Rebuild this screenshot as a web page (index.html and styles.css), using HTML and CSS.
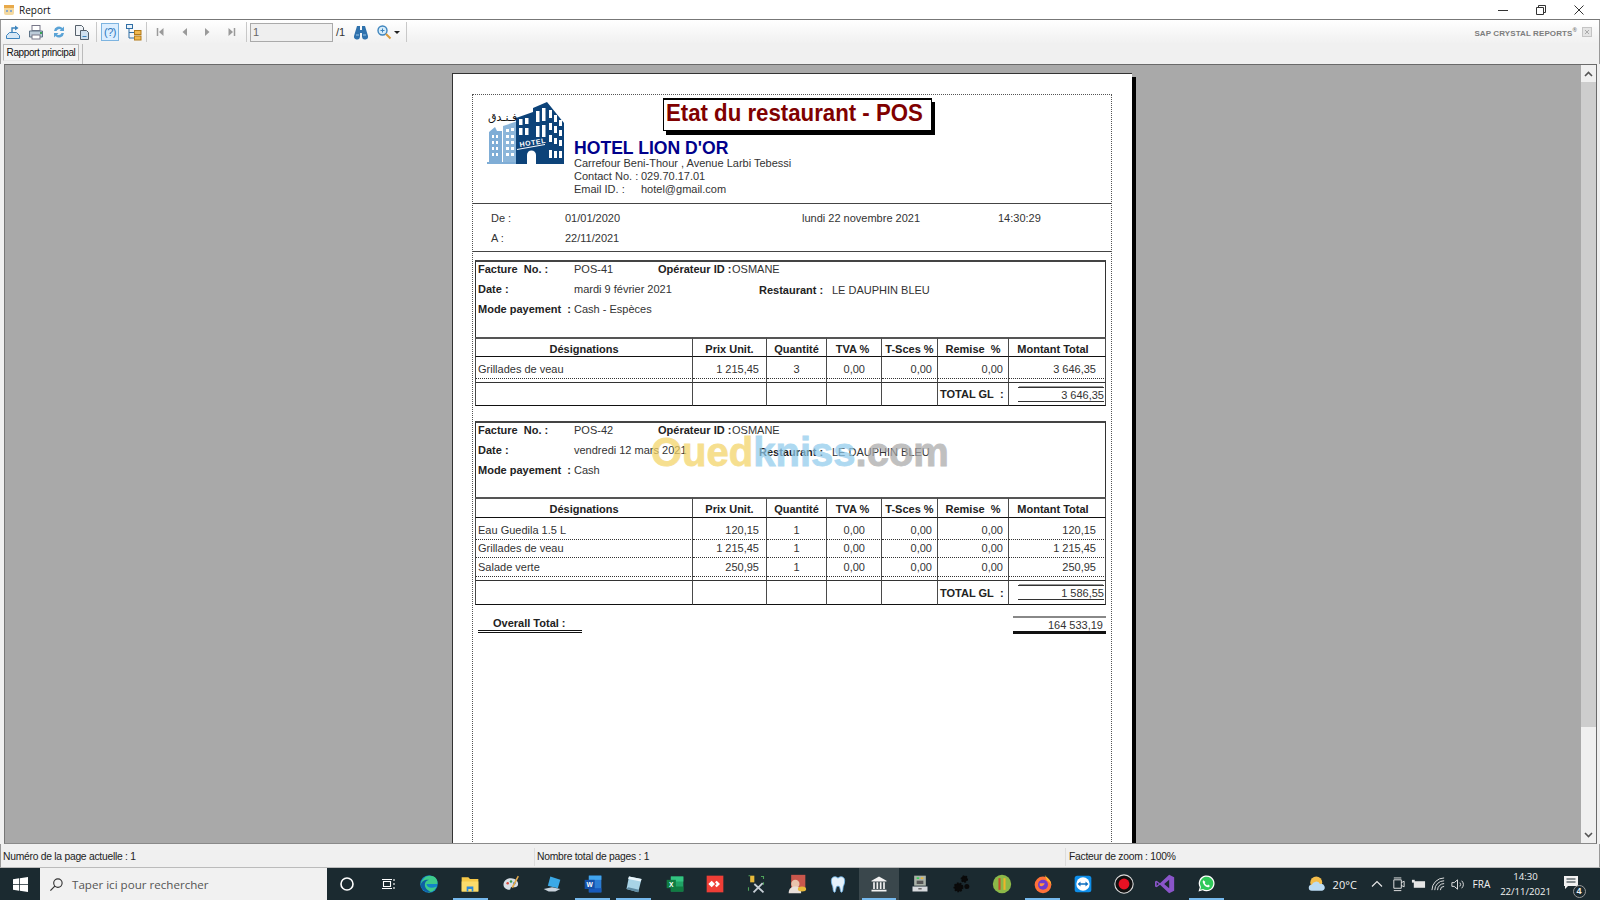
FILE: index.html
```html
<!DOCTYPE html>
<html lang="fr">
<head>
<meta charset="utf-8">
<title>Report</title>
<link rel="stylesheet" href="styles.css">
</head>
<body>
<div class="window">
  <header class="titlebar">
    <svg class="app-icon" viewBox="0 0 12 12"><rect x="1" y="1" width="10" height="10" rx="2" fill="#f4d9a0"/><rect x="1" y="1" width="10" height="3" fill="#e8a94a"/><rect x="3" y="6" width="2" height="2" fill="#8aa7c9"/><rect x="7" y="6" width="2" height="2" fill="#8aa7c9"/></svg>
    <span class="title-text">Report</span>
    <div class="win-controls">
      <svg viewBox="0 0 12 12"><path d="M1 6.500h10" stroke="#333" fill="none"/></svg>
      <svg viewBox="0 0 12 12"><path d="M1.500 3.500h7v7h-7zM3.500 3.500v-2h7v7h-2" stroke="#333" fill="none"/></svg>
      <svg viewBox="0 0 12 12"><path d="M1.500 1.500l9 9M10.500 1.500l-9 9" stroke="#333" fill="none"/></svg>
    </div>
  </header>

  <nav class="toolbar">
    <button class="tool"><svg viewBox="0 0 16 16"><path d="M1.500 14.500v-3l3-3h7l3 3v3z" fill="#d7e8f6" stroke="#3d84bd"/><path d="M7 9V4h4" stroke="#3d84bd" fill="none" stroke-width="1.400"/><path d="M10 1.500l3.500 2.500-3.500 2.500z" fill="#3d84bd"/></svg></button>
    <button class="tool"><svg viewBox="0 0 16 16"><rect x="4" y="1.500" width="8" height="5" fill="#fff" stroke="#778"/><path d="M1.500 7h13v6h-13z" fill="#bccbd9" stroke="#5f7488"/><rect x="4" y="11" width="8" height="4" fill="#fff" stroke="#778"/><rect x="12" y="8" width="2" height="2" fill="#3aa655"/></svg></button>
    <button class="tool"><svg viewBox="0 0 16 16"><path d="M3 7a5 5 0 0 1 8.500-3L13 2.500V7H8.500l1.500-1.500A3 3 0 0 0 5.500 7z" fill="#5aa3d6"/><path d="M13 9a5 5 0 0 1-8.500 3L3 13.500V9h4.500L6 10.500A3 3 0 0 0 10.500 9z" fill="#5aa3d6"/></svg></button>
    <button class="tool"><svg viewBox="0 0 16 16"><path d="M1.500 1.500h6l2 2v8h-8z" fill="#eef2f6" stroke="#55606b"/><path d="M6.500 6.500h6l2 2v7h-8z" fill="#cfe0ef" stroke="#55606b"/><path d="M8.500 12.500h4" stroke="#3d84bd"/></svg></button>
    <i class="tool-sep tool-sep-a"></i>
    <button class="tool tool-on"><span class="help-glyph">(?)</span></button>
    <button class="tool tool-tree"><svg viewBox="0 0 18 18"><rect x="1.500" y="1.500" width="6" height="4" fill="#e9f2fa" stroke="#2f6ea5"/><path d="M4 5.500v9.500h5M4 9.500h5" stroke="#2f6ea5" fill="none"/><rect x="9.500" y="7.500" width="6.500" height="4" fill="#f2b94e" stroke="#b27a1b"/><rect x="9.500" y="13" width="6.500" height="4" fill="#f2b94e" stroke="#b27a1b"/></svg></button>
    <i class="tool-sep tool-sep-b"></i>
    <button class="tool tool-nav"><svg viewBox="0 0 9 12"><path d="M1.500 2v8" stroke="#9a9a9a" stroke-width="1.500"/><path d="M7.500 2v8L3 6z" fill="#9a9a9a"/></svg></button>
    <button class="tool tool-nav"><svg viewBox="0 0 9 12"><path d="M7 2v8L2.500 6z" fill="#9a9a9a"/></svg></button>
    <button class="tool tool-nav"><svg viewBox="0 0 9 12"><path d="M2 2v8L6.500 6z" fill="#9a9a9a"/></svg></button>
    <button class="tool tool-nav"><svg viewBox="0 0 9 12"><path d="M1.500 2v8L6 6z" fill="#9a9a9a"/><path d="M7.500 2v8" stroke="#9a9a9a" stroke-width="1.500"/></svg></button>
    <i class="tool-sep tool-sep-c"></i>
    <div class="page-input">1</div>
    <span class="page-of">/1</span>
    <button class="tool tool-bino"><svg viewBox="0 0 16 16"><path d="M4 2h3v4h2V2h3l3 10a2.500 2.500 0 0 1-6 1V9H7v4a2.500 2.500 0 0 1-6-1z" fill="#2f72ad"/><path d="M3 11h3M10 11h3" stroke="#9cc4e4"/></svg></button>
    <button class="tool tool-zoom"><svg viewBox="0 0 16 16"><circle cx="6.500" cy="6.500" r="4.500" fill="#d6ecfa" stroke="#3d84bd" stroke-width="1.400"/><path d="M4.500 6.500h4M6.500 4.500v4" stroke="#3d84bd"/><path d="M10 10l4.500 4.500" stroke="#d99a3c" stroke-width="2"/></svg></button>
    <i class="caret"></i>
    <i class="tool-sep tool-sep-d"></i>
    <div class="brand">SAP CRYSTAL REPORTS<sup>®</sup></div>
    <svg class="brand-close" viewBox="0 0 10 10"><rect x=".5" y=".5" width="9" height="9" fill="#e4e4e4" stroke="#c4c4c4"/><path d="M3 3l4 4M7 3L3 7" stroke="#aaa"/></svg>
  </nav>

  <div class="tabs">
    <div class="tab">Rapport principal</div>
    <i class="tab-sep"></i>
  </div>

  <main class="viewer">
    <div class="canvas">
      <article class="page">
        <div class="frame">
          <section class="head">
            <div class="logo">
              <svg viewBox="0 0 78 62" width="78" height="62">
                <path d="M2 62V30l6-5 2 4h5v33z" fill="#7fadd6"/>
                <path d="M16 62V24l15-5v43z" fill="#8cb6da"/>
                <g fill="#fff">
                  <rect x="5" y="33" width="2" height="3"/><rect x="9" y="33" width="2" height="3"/><rect x="5" y="39" width="2" height="3"/><rect x="9" y="39" width="2" height="3"/><rect x="5" y="45" width="2" height="3"/><rect x="9" y="45" width="2" height="3"/><rect x="5" y="51" width="2" height="3"/><rect x="9" y="51" width="2" height="3"/>
                  <rect x="19" y="27" width="3" height="3"/><rect x="24" y="26" width="3" height="3"/><rect x="19" y="33" width="3" height="3"/><rect x="24" y="33" width="3" height="3"/><rect x="19" y="39" width="3" height="3"/><rect x="24" y="39" width="3" height="3"/><rect x="19" y="45" width="3" height="3"/><rect x="24" y="45" width="3" height="3"/><rect x="19" y="51" width="3" height="3"/><rect x="24" y="51" width="3" height="3"/>
                </g>
                <path d="M0 60h30v2H0z" fill="#7fadd6"/>
                <path d="M29 16l17-6V6L60 0l17 21v41H29z" fill="#0d4379"/>
                <g fill="#fff">
                  <rect x="32" y="17" width="3.500" height="6"/><rect x="38" y="16" width="3.500" height="6"/>
                  <rect x="32" y="26" width="3.500" height="7"/><rect x="38" y="26" width="3.500" height="7"/>
                  <rect x="49" y="9" width="3.500" height="11"/><rect x="55" y="6" width="3.500" height="13"/>
                  <rect x="49" y="24" width="3.500" height="11"/><rect x="55" y="23" width="3.500" height="12"/>
                  <rect x="62" y="8" width="3" height="8"/><rect x="67" y="13" width="3" height="7"/><rect x="72" y="18" width="3" height="6"/>
                  <rect x="62" y="21" width="3" height="7"/><rect x="67" y="24" width="3" height="7"/><rect x="72" y="28" width="3" height="6"/>
                  <rect x="62" y="33" width="3" height="7"/><rect x="67" y="36" width="3" height="6"/><rect x="72" y="38" width="3" height="6"/>
                  <rect x="62" y="48" width="3" height="8"/><rect x="67" y="49" width="3" height="7"/><rect x="72" y="49" width="3" height="7"/>
                  <path d="M40 62v-9a4.500 4.500 0 0 1 9 0v9z"/>
                  <path d="M30 47l28-5v1L30 48z"/>
                </g>
                <text class="logo-sign" x="33" y="45" transform="rotate(-9 33 45)">HOTEL</text>
              </svg>
              <span class="logo-ar" dir="rtl" lang="ar">فـنـدق</span>
            </div>
            <div class="head-right">
              <h1 class="report-title"><span>Etat du restaurant - POS</span></h1>
              <h2 class="company">HOTEL LION D'OR</h2>
              <p class="head-line">Carrefour Beni-Thour , Avenue Larbi Tebessi</p>
              <p class="head-line head-split"><span>Contact No. :</span><span>029.70.17.01</span></p>
              <p class="head-line head-split"><span>Email ID. :</span><span>hotel@gmail.com</span></p>
            </div>
          </section>

          <section class="dates">
            <span>De :</span><span>01/01/2020</span><span>lundi 22 novembre 2021</span><span>14:30:29</span>
            <span>A :</span><span>22/11/2021</span>
          </section>

          <section class="invoice">
            <div class="meta">
              <div class="meta-row meta-r1"><b>Facture&nbsp; No. :</b><span>POS-41</span><b>Opérateur ID :</b><span>OSMANE</span></div>
              <div class="meta-row meta-r2"><b>Date :</b><span>mardi 9 février 2021</span><b class="drop">Restaurant :</b><span class="drop">LE DAUPHIN BLEU</span></div>
              <div class="meta-row meta-r3"><b>Mode payement&nbsp; :</b><span>Cash - Espèces</span></div>
            </div>
            <table class="lines">
              <colgroup><col class="c1"><col class="c2"><col class="c3"><col class="c4"><col class="c5"><col class="c6"><col class="c7"></colgroup>
              <thead>
                <tr><th>Désignations</th><th>Prix Unit.</th><th>Quantité</th><th>TVA %</th><th>T-Sces %</th><th>Remise&nbsp; %</th><th>Montant Total</th></tr>
              </thead>
              <tbody>
                <tr class="first"><td>Grillades de veau</td><td>1 215,45</td><td>3</td><td>0,00</td><td>0,00</td><td>0,00</td><td>3 646,35</td></tr>
                <tr class="gap"><td></td><td></td><td></td><td></td><td></td><td></td><td></td></tr>
              </tbody>
              <tfoot>
                <tr><td></td><td></td><td></td><td></td><td></td><td class="total-label">TOTAL GL&nbsp; :</td><td class="total-value"><div>3 646,35</div></td></tr>
              </tfoot>
            </table>
          </section>

          <section class="invoice invoice-next">
            <div class="meta">
              <div class="meta-row meta-r1"><b>Facture&nbsp; No. :</b><span>POS-42</span><b>Opérateur ID :</b><span>OSMANE</span></div>
              <div class="meta-row meta-r2"><b>Date :</b><span>vendredi 12 mars 2021</span><b class="drop">Restaurant :</b><span class="drop">LE DAUPHIN BLEU</span></div>
              <div class="meta-row meta-r3"><b>Mode payement&nbsp; :</b><span>Cash</span></div>
            </div>
            <table class="lines">
              <colgroup><col class="c1"><col class="c2"><col class="c3"><col class="c4"><col class="c5"><col class="c6"><col class="c7"></colgroup>
              <thead>
                <tr><th>Désignations</th><th>Prix Unit.</th><th>Quantité</th><th>TVA %</th><th>T-Sces %</th><th>Remise&nbsp; %</th><th>Montant Total</th></tr>
              </thead>
              <tbody>
                <tr class="first"><td>Eau Guedila 1.5 L</td><td>120,15</td><td>1</td><td>0,00</td><td>0,00</td><td>0,00</td><td>120,15</td></tr>
                <tr class="mid"><td>Grillades de veau</td><td>1 215,45</td><td>1</td><td>0,00</td><td>0,00</td><td>0,00</td><td>1 215,45</td></tr>
                <tr class="end"><td>Salade verte</td><td>250,95</td><td>1</td><td>0,00</td><td>0,00</td><td>0,00</td><td>250,95</td></tr>
                <tr class="gap"><td></td><td></td><td></td><td></td><td></td><td></td><td></td></tr>
              </tbody>
              <tfoot>
                <tr><td></td><td></td><td></td><td></td><td></td><td class="total-label">TOTAL GL&nbsp; :</td><td class="total-value"><div>1 586,55</div></td></tr>
              </tfoot>
            </table>
          </section>

          <section class="overall">
            <div class="overall-label">Overall Total :</div>
            <div class="overall-value">164 533,19</div>
          </section>
        </div>
        <div class="watermark"><span class="wm-y">Oued</span><span class="wm-b">kniss</span><span class="wm-g">.com</span></div>
      </article>
    </div>
    <aside class="scrollbar">
      <div class="sb-btn"><svg viewBox="0 0 9 6"><path d="M1 5l3.500-3.500L8 5" stroke="#555" stroke-width="1.600" fill="none"/></svg></div>
      <div class="sb-thumb"></div>
      <div class="sb-track"></div>
      <div class="sb-btn"><svg viewBox="0 0 9 6"><path d="M1 1l3.500 3.500L8 1" stroke="#555" stroke-width="1.600" fill="none"/></svg></div>
    </aside>
  </main>

  <footer class="statusbar">
    <div class="st st1">Numéro de la page actuelle : 1</div>
    <div class="st st2">Nombre total de pages : 1</div>
    <div class="st st3">Facteur de zoom : 100%</div>
  </footer>

  <div class="taskbar">
    <div class="start"><svg viewBox="0 0 16 16" width="15" height="15"><path d="M0 2.300l6.500-.9v6.200H0zM7.300 1.300L16 0v7.600H7.300zM0 8.400h6.500v6.200L0 13.700zM7.300 8.400H16V16l-8.700-1.300z" fill="#fff"/></svg></div>
    <div class="search">
      <svg viewBox="0 0 16 16" width="15" height="15"><circle cx="9.500" cy="6.500" r="4.500" fill="none" stroke="#333" stroke-width="1.200"/><path d="M6.200 9.800L1.500 14.500" stroke="#333" stroke-width="1.300"/></svg>
      <span>Taper ici pour rechercher</span>
    </div>
    <div class="task"><svg viewBox="0 0 20 20"><circle cx="10" cy="10" r="6" fill="none" stroke="#fff" stroke-width="1.600"/></svg></div>
    <div class="task"><svg viewBox="0 0 20 20"><path d="M4 5.500h10M4 14.500h10M5.500 7.500h7v5h-7z M16 5v2M16 9v2M16 13v2" fill="none" stroke="#fff" stroke-width="1.100"/></svg></div>
    <div class="task"><svg viewBox="0 0 24 24"><circle cx="12" cy="12" r="10.500" fill="#1383c9"/><path d="M2 13C3 6 8 2 13 2c6 0 10 4 9 10H9c0 4 6 6 12 3-2 5-6 7-10 7C9 18 5 15 2 13z" fill="#3ecb8b"/><path d="M2 13c1-5 6-7 10-6-3 1-5 3-5 6 0 4 3 7 7 8-6 2-12-3-12-8z" fill="#0f5fa3"/></svg></div>
    <div class="task run"><svg viewBox="0 0 24 24"><path d="M2 4h8l2 2h10v15H2z" fill="#f7c948"/><path d="M2 9h20v12H2z" fill="#fbdb6b"/><path d="M8 21v-6h8v6h-2v-3h-4v3z" fill="#2b88d8"/></svg></div>
    <div class="task"><svg viewBox="0 0 24 24"><path d="M12 5C6 5 3 9 3 13c0 4 4 6 7 6 2 0 1-2 2-3 1-1 6 1 8-2 2-4-2-9-8-9z" fill="#d8dfe6"/><circle cx="8" cy="11" r="1.500" fill="#d94a3d"/><circle cx="12" cy="9" r="1.500" fill="#3a9a4b"/><circle cx="16" cy="11" r="1.500" fill="#2f7fd6"/><path d="M20 2l1.500 1-7 14-2-1z" fill="#e2a84b"/></svg></div>
    <div class="task"><svg viewBox="0 0 24 24"><path d="M10 3l12 4-3 10-12-3z" fill="#3ba9e6"/><path d="M2 18l10-2 10 2-6 3H8z" fill="#c9d3dc"/></svg></div>
    <div class="task run"><svg viewBox="0 0 24 24"><path d="M7 2h15v20H7z" fill="#2b7cd3"/><path d="M7 2h15v5H7z" fill="#41a5ee"/><path d="M7 17h15v5H7z" fill="#185abd"/><rect x="2" y="7" width="12" height="11" fill="#1450a8"/><text class="tile-letter" x="8" y="16" text-anchor="middle">W</text></svg></div>
    <div class="task run"><svg viewBox="0 0 24 24"><path d="M6 3l15 3-4 16L3 18z" fill="#a8d3e6"/><path d="M6 3l15 3-1 3L5 6z" fill="#eaf5fa"/><path d="M3 18l14 4 1-3-13-3z" fill="#5f8ba3"/></svg></div>
    <div class="task"><svg viewBox="0 0 24 24"><path d="M7 3h15v18H7z" fill="#21a366"/><path d="M7 3h15v6H7z" fill="#33c481"/><path d="M7 15h15v6H7z" fill="#107c41"/><rect x="2" y="7" width="11" height="10" fill="#107c41"/><text class="tile-letter" x="7.500" y="15.500" text-anchor="middle">X</text></svg></div>
    <div class="task"><svg viewBox="0 0 24 24"><rect x="2" y="2" width="20" height="20" fill="#ef3e36"/><path d="M8 8l-4 4 4 4 4-4zM14 8l4 4-4 4 -2-2 2-2-2-2z" fill="#fff"/></svg></div>
    <div class="task"><svg viewBox="0 0 24 24"><rect x="5" y="2" width="5" height="8" fill="#e8b93a"/><path d="M3 2h2M3 20v-4M18 3h3v3M21 10v3" stroke="#4fa25a" stroke-width="1.300" fill="none"/><path d="M10 12l11 10M20 11L9 22" stroke="#c7cfd6" stroke-width="2.200"/></svg></div>
    <div class="task"><svg viewBox="0 0 24 24"><rect x="5" y="1" width="17" height="16" fill="#c9574c"/><circle cx="10" cy="12" r="5" fill="#e9c3ac"/><path d="M2 23c0-6 4-8 8-8s7 2 7 8z" fill="#e9e0da"/><ellipse cx="18" cy="18" rx="5" ry="3" fill="#e8b93a"/></svg></div>
    <div class="task"><svg viewBox="0 0 24 24"><path d="M12 5c3-3 8-2 8 3 0 5-2 6-2 9 0 3-1 5-2 5s-1-3-2-6c-.5-2-3.500-2-4 0-1 3-1 6-2 6s-2-2-2-5c0-3-2-4-2-9 0-5 5-6 8-3z" fill="#e5f1fb" stroke="#6fb6ea"/></svg></div>
    <div class="task run active"><svg viewBox="0 0 24 24"><path d="M3 8l9-5 9 5v1H3z" fill="#f2f2f2"/><path d="M5 10h2v8H5zM9 10h2v8H9zM13 10h2v8h-2zM17 10h2v8h-2zM3 19h18v2H3z" fill="#f2f2f2"/></svg></div>
    <div class="task"><svg viewBox="0 0 24 24"><rect x="5" y="2" width="14" height="12" fill="#aab2a8"/><rect x="8" y="4" width="3" height="2" fill="#3c5"/><rect x="13" y="4" width="3" height="2" fill="#e8b93a"/><rect x="8" y="8" width="8" height="4" fill="#555"/><rect x="3" y="15" width="18" height="6" fill="#d7dadd"/><rect x="10" y="17" width="4" height="1.500" fill="#555"/></svg></div>
    <div class="task"><svg viewBox="0 0 24 24"><g fill="#0a0a0a" stroke="#0a0a0a" stroke-width="2" stroke-dasharray="2 1.500"><circle cx="9" cy="16" r="5"/><circle cx="16" cy="6" r="3.500"/></g><circle cx="19" cy="15" r="3" fill="#0a0a0a"/></svg></div>
    <div class="task"><svg viewBox="0 0 24 24"><circle cx="12" cy="12" r="11" fill="#8cb848"/><path d="M9 5v14" stroke="#c64a2e" stroke-width="2.500"/><path d="M15 5v14" stroke="#f0b429" stroke-width="2.500"/></svg></div>
    <div class="task run"><svg viewBox="0 0 24 24"><circle cx="12" cy="13" r="10" fill="#ff7139"/><path d="M14 1c2 3 8 6 8 13 0-3-3-5-5-6z" fill="#ffbd2e"/><circle cx="12" cy="13" r="6" fill="#6e3bd0"/><path d="M8 11h6a4 4 0 0 1-6 3z" fill="#ff9640"/></svg></div>
    <div class="task"><svg viewBox="0 0 24 24"><rect x="2" y="2" width="20" height="20" rx="3" fill="#0e8ee9"/><circle cx="12" cy="12" r="8" fill="#fff"/><path d="M5.500 12l3.500-3v2h6V9l3.500 3-3.500 3v-2H9v2z" fill="#0e6fc0"/></svg></div>
    <div class="task"><svg viewBox="0 0 24 24"><circle cx="12" cy="12" r="11" fill="#111" stroke="#ddd" stroke-width="1.300"/><circle cx="12" cy="12" r="6.500" fill="#e81123"/></svg></div>
    <div class="task"><svg viewBox="0 0 24 24"><path d="M17 1l6 3v16l-6 3L6 13l-4 3-2-1V9l2-1 4 3z" fill="#8a55c9"/><path d="M17 7l-6 5 6 5z" fill="#1b2a30"/><path d="M2 10l2.500 2L2 14z" fill="#1b2a30"/></svg></div>
    <div class="task run"><svg viewBox="0 0 24 24"><path d="M3 21l1.500-5A9.500 9.500 0 1 1 8 19.500z" fill="#fff"/><path d="M5 19l1-3.500A8 8 0 1 1 8.500 18z" fill="#30c85a"/><path d="M9 7.500c-1 .5-1.500 2 0 4.500s4 4 5.500 4c1 0 2-1 2-2l-2-1.300-1 1c-1.200-.3-2.700-2-3-3l.8-1z" fill="#fff"/></svg></div>
    <div class="tray">
      <svg class="weather" viewBox="0 0 24 24"><circle cx="11" cy="10" r="8" fill="#f4bd4b"/><path d="M5 21a4 4 0 0 1 0-8 6 6 0 0 1 11-1 4.500 4.500 0 0 1 3 9z" fill="#bcdcf4"/></svg>
      <span class="temp">20°C</span>
      <svg class="tray-caret" viewBox="0 0 12 8"><path d="M1 6.500l5-5 5 5" fill="none" stroke="#e6e6e6" stroke-width="1.200"/></svg>
      <svg class="tray-ico ti-meet" viewBox="0 0 16 16"><path d="M3 3h8v9H3zM11 6l3-1.500v6L11 9M3 1h8M3 14.500h8" fill="none" stroke="#e6e6e6"/></svg>
      <svg class="tray-ico ti-bat" viewBox="0 0 16 16"><rect x="3" y="4.500" width="12" height="7" fill="#e6e6e6"/><path d="M1 3h3v3H1z" fill="#e6e6e6"/></svg>
      <svg class="tray-ico ti-wifi" viewBox="0 0 16 16"><path d="M1 14a13 13 0 0 1 13-13M4 14a10 10 0 0 1 10-10M7 14a7 7 0 0 1 7-7M10 14a4 4 0 0 1 4-4" fill="none" stroke="#e6e6e6"/></svg>
      <svg class="tray-ico ti-vol" viewBox="0 0 16 16"><path d="M2 6h2.500L8 3v10l-3.500-3H2zM10.500 6a3 3 0 0 1 0 4M12.500 4a6 6 0 0 1 0 8" fill="none" stroke="#e6e6e6"/></svg>
      <span class="lang">FRA</span>
      <div class="clock"><span>14:30</span><span>22/11/2021</span></div>
      <div class="notif">
        <svg viewBox="0 0 16 16" width="16" height="16"><path d="M1 2h14v10H5l-3 3v-3H1z" fill="#f2f2f2"/><path d="M3.500 5h9M3.500 8h9" stroke="#1b2a30"/></svg>
        <span class="notif-badge">4</span>
      </div>
    </div>
  </div>
</div>
</body>
</html>
```

FILE: styles.css
```css
* { box-sizing: border-box; }
html, body { margin: 0; height: 100%; }
body { font-family: "Liberation Sans", Arial, sans-serif; color: #222; overflow: hidden; }
p, h1, h2 { margin: 0; }
i { font-style: normal; display: block; }

.window { width: 1600px; height: 900px; display: flex; flex-direction: column; background: #f0f0f0; overflow: hidden; }

/* title bar */
.titlebar { height: 20px; flex: none; background: #fff; display: flex; align-items: center; border-bottom: 1px solid #777; padding-left: 3px; }
.app-icon { width: 12px; height: 12px; }
.title-text { font: 10px "Open Sans", sans-serif; margin-left: 4px; color: #111; }
.win-controls { margin-left: auto; display: flex; gap: 26px; padding-right: 15px; }
.win-controls svg { width: 12px; height: 12px; }

/* toolbar */
.toolbar { height: 24px; flex: none; display: flex; align-items: center; border-left: 1px solid #999; border-right: 1px solid #999; background: linear-gradient(#fff, #f0f0f0); }
.tool { width: 23px; height: 20px; padding: 0; border: 1px solid transparent; background: none; display: flex; align-items: center; justify-content: center; flex: none; }
.tool svg { width: 16px; height: 16px; }
.tool-sep { width: 1px; height: 20px; background: #c8c8c8; flex: none; }
.tool-sep-a { margin: 0 4px 0 3px; }
.tool-on { width: 18px; height: 18px; border-color: #7db4e0; background: #dbeeff; }
.help-glyph { font: 11px "Liberation Sans", sans-serif; color: #2f78bd; white-space: nowrap; letter-spacing: -.5px; }
.tool-tree { margin-left: 4px; width: 22px; }
.tool-tree svg { width: 18px; height: 18px; }
.tool-sep-b { margin: 0 2px 0 1px; }
.tool-nav { width: 23.500px; }
.tool-nav svg { width: 9px; height: 12px; }
.tool-sep-c { margin: 0 3px 0 3px; }
.page-input { width: 83px; height: 19px; border: 1px solid #aaa; background: #efefef; font: 11px "Liberation Sans", sans-serif; color: #666; padding: 2px 2px; flex: none; }
.page-of { font-size: 11px; margin-left: 3px; width: 13px; color: #333; }
.tool-bino { width: 24px; }
.tool-zoom { width: 21px; }
.caret { width: 0; height: 0; border: 3px solid transparent; border-top: 3px solid #222; border-bottom: 0; margin-left: 0; }
.tool-sep-d { margin-left: 6px; }
.brand { margin-left: auto; font: bold 8px "Liberation Sans", sans-serif; color: #7d7d7d; white-space: nowrap; letter-spacing: .1px; padding-top: 3px; }
.brand sup { font-size: 6px; line-height: 0; }
.brand-close { width: 10px; height: 10px; margin: 0 7px 0 5px; }

/* tabs */
.tabs { height: 20px; flex: none; display: flex; align-items: flex-start; padding-left: 2px; background: #f0f0f0; border-left: 1px solid #999; border-right: 1px solid #999; }
.tab { width: 76px; height: 17px; border: 1px solid #bbb; border-bottom-color: #e8e8e8; background: #f4f4f4; font-size: 10px; line-height: 15px; letter-spacing: -.4px; text-align: center; color: #111; white-space: nowrap; }
.tab-sep { width: 1px; height: 20px; background: #bbb; margin-left: 3px; }

/* viewer */
.viewer { flex: none; height: 780px; margin: 0 3px 0 4px; display: flex; border: 1px solid #6a6a6a; border-left-color: #777; border-bottom-color: #8a8a8a; overflow: hidden; }
.canvas { flex: 1; min-width: 0; background: #a9a9a9; overflow: hidden; display: flex; justify-content: center; padding: 8px 2px 0 0; }
.scrollbar { width: 15px; flex: none; display: flex; flex-direction: column; background: #f0f0f0; }
.sb-btn { height: 17px; flex: none; display: flex; align-items: center; justify-content: center; }
.sb-btn svg { width: 9px; height: 6px; }
.sb-thumb { height: 645px; flex: none; background: #cdcdcd; }
.sb-track { flex: 1; }

/* report page */
.page { position: relative; width: 680px; height: 900px; flex: none; background: #fff; border-top: 1px solid #333; border-left: 1px solid #333; box-shadow: 4px 4px 0 #000; padding: 20px 0 0 19px; font-size: 11px; color: #333; }
.frame { width: 640px; height: 860px; border: 1px dotted #555; border-bottom: 0; }

.head { height: 109px; border-bottom: 1px solid #444; display: flex; }
.logo { position: relative; width: 101px; flex: none; padding: 7px 0 0 14px; }
.logo svg { display: block; overflow: visible; }
.logo-sign { font: bold 7px "Liberation Sans", sans-serif; fill: #fff; letter-spacing: .6px; }
.logo-ar { position: absolute; left: 15px; top: 16px; font: 11px "DejaVu Sans", sans-serif; color: #111; line-height: 14px; white-space: nowrap; }
.head-right { flex: 1; padding-top: 3px; }
.report-title { width: 269px; height: 33px; margin-left: 89px; padding-right: 6px; border: 1px solid #000; border-top-width: 2px; box-shadow: 3px 4px 0 #000; background: #fff; font: bold 24.300px/25px "Liberation Sans", sans-serif; color: #800000; text-align: center; white-space: nowrap; }
.report-title span { display: inline-block; transform: scaleX(.915); transform-origin: center; margin: 0 -20px; }
.company { font: bold 17.600px/18px "Liberation Sans", sans-serif; color: #00008b; margin-top: 8px; white-space: nowrap; }
.head-line { line-height: 13px; white-space: nowrap; }
.head-split { display: flex; }
.head-split span:first-child { width: 67px; flex: none; }

.dates { height: 48px; border-bottom: 1px solid #444; padding: 4px 0 0 18px; display: grid; grid-template-columns: 74px 237px 196px 1fr; grid-auto-rows: 20px; align-items: center; }

.invoice { margin: 8px 0 0 2px; width: 631px; }
.invoice-next { margin-top: 15px; }
.meta { height: 77px; border: 1px solid #333; border-top: 2px solid #444; border-bottom: 0; padding: 0 0 0 2px; }
.invoice-next .meta { height: 76px; }
.meta-row { display: grid; height: 14px; margin-bottom: 6px; align-items: center; white-space: nowrap; }
.meta-r1 { grid-template-columns: 96px 84px 74px 1fr; }
.meta-r2 { grid-template-columns: 96px 185px 73px 1fr; }
.meta-r3 { grid-template-columns: 96px 1fr; }
.meta b { color: #222; }
.drop { position: relative; top: 1px; }
.invoice-next .drop { top: 2px; }

.lines { width: 631px; table-layout: fixed; border-collapse: separate; border-spacing: 0; font-size: 11px; }
.c1 { width: 218px; } .c2 { width: 74px; } .c3 { width: 60px; } .c4 { width: 55px; } .c5 { width: 56px; } .c6 { width: 71px; } .c7 { width: 97px; }
.lines th, .lines td { padding: 0; border-right: 1px solid #4a4a4a; white-space: nowrap; }
.lines th:first-child, .lines td:first-child { border-left: 1px solid #4a4a4a; }
.lines th { height: 20px; padding-top: 2px; border-top: 2px solid #555; border-bottom: 1px solid #111; font-weight: bold; color: #222; text-align: center; }
.invoice-next .lines th { height: 21px; }
.lines th:nth-child(4) { padding-right: 3px; }
.lines th:nth-child(7) { padding-right: 8px; }
.lines tbody td { vertical-align: top; line-height: 16px; border-bottom: 1px dotted #333; text-align: right; }
.lines tbody td:first-child { text-align: left; padding-left: 2px; }
.lines tbody td:nth-child(2) { padding-right: 7px; }
.lines tbody td:nth-child(3) { text-align: center; }
.lines tbody td:nth-child(4) { padding-right: 16px; }
.lines tbody td:nth-child(5), .lines tbody td:nth-child(6) { padding-right: 5px; }
.lines tbody td:nth-child(7) { padding-right: 9px; }
.lines tr.first td { height: 22px; padding-top: 4px; }
.lines tr.mid td { height: 18px; }
.lines tr.end td { height: 19px; padding-top: 1px; }
.lines tr.gap td { height: 3px; line-height: 0; font-size: 0; border-bottom: 0; }
.lines tfoot td { height: 24px; border-top: 1px solid #333; border-bottom: 1px solid #111; }
.invoice-next .lines tfoot td { height: 25px; }
.total-label { font-weight: bold; padding-left: 2px !important; color: #222; }
.total-value div { margin: 0 1px 0 9px; height: 15px; border-top: 1px solid #333; border-bottom: 1px solid #333; box-shadow: 0 -2px 0 -1px #999; text-align: right; line-height: 14px; }

.overall { width: 631px; margin: 11px 0 0 2px; display: flex; justify-content: space-between; align-items: flex-start; white-space: nowrap; }
.overall-label { margin-left: 3px; width: 104px; height: 17px; padding-left: 15px; line-height: 14px; font-weight: bold; color: #222; border-bottom: 3px double #111; }
.overall-value { width: 93px; height: 18px; padding-right: 3px; text-align: right; line-height: 14px; border-top: 2px solid #888; border-bottom: 3px solid #111; }

.watermark { position: absolute; left: 198px; top: 356px; font: bold 40px/44px "Liberation Sans", sans-serif; -webkit-text-stroke: .8px currentColor; white-space: nowrap; opacity: .72; pointer-events: none; }
.wm-y { color: #f3d365; }
.wm-b { color: #8fcbec; }
.wm-g { color: #a8a8a8; }

/* status bar */
.statusbar { height: 24px; flex: none; display: flex; align-items: center; padding-top: 3px; background: #f0f0f0; border-left: 1px solid #999; border-right: 1px solid #999; border-bottom: 1px solid #bbb; font: 10.300px "Liberation Sans", sans-serif; letter-spacing: -.25px; color: #222; }
.st { height: 18px; line-height: 18px; padding-left: 2px; white-space: nowrap; }
.st1 { width: 533px; }
.st2 { width: 531px; border-left: 1px solid #ddd; }
.st3 { flex: 1; border-left: 1px solid #ddd; padding-left: 3px; }

/* taskbar */
.taskbar { height: 32px; flex: none; background: #1b2a30; display: flex; align-items: stretch; color: #f2f2f2; }
.start { width: 40px; flex: none; display: flex; align-items: center; justify-content: center; }
.search { width: 287px; flex: none; background: #f1f1f1; display: flex; align-items: center; gap: 8px; padding-left: 9px; color: #555; font: 11.600px "Open Sans", sans-serif; }
.task { width: 40.900px; flex: none; display: flex; align-items: center; justify-content: center; position: relative; }
.task svg { width: 20px; height: 20px; }
.tile-letter { font: bold 8px "Liberation Sans", sans-serif; fill: #fff; }
.task.run::after { content: ""; position: absolute; left: 3px; right: 3px; bottom: 0; height: 2px; background: #76b9ed; }
.task.active { background: #3a474c; }
.tray { flex: 1; display: flex; align-items: center; padding-left: 78px; font: 11px "Open Sans", sans-serif; }
.weather { width: 18px; height: 18px; flex: none; margin-left: 3px; }
.temp { margin-left: 7px; width: 32px; flex: none; }
.tray-caret { width: 12px; height: 8px; margin-left: 6px; flex: none; }
.tray-ico { width: 15px; height: 15px; flex: none; }
.ti-meet { margin-left: 8px; }
.ti-bat, .ti-wifi { margin-left: 5px; }
.ti-vol { margin-left: 4px; }
.lang { margin-left: 8px; font-size: 10px; width: 22px; flex: none; }
.clock { display: flex; flex-direction: column; align-items: center; font-size: 9.600px; line-height: 15px; width: 58px; margin-left: 2px; flex: none; }
.notif { position: relative; margin-left: 8px; width: 20px; height: 20px; }
.notif-badge { position: absolute; right: -3px; bottom: -4px; width: 13px; height: 13px; border-radius: 50%; border: 1px solid #999; background: #1b2a30; font: bold 9px/11px "Liberation Sans", sans-serif; text-align: center; }
```
